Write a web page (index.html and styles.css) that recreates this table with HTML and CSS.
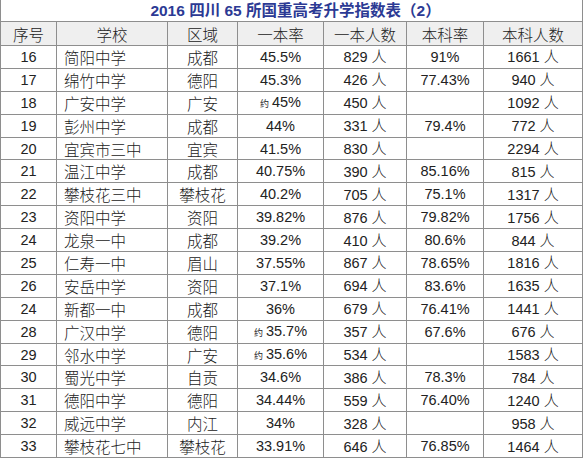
FILE: index.html
```html
<!DOCTYPE html>
<html lang="zh">
<head>
<meta charset="utf-8">
<title>2016 四川 65 所国重高考升学指数表（2）</title>
<link rel="stylesheet" href="styles.css">
</head>
<body>
<table class="sheet">
  <colgroup>
    <col class="c-no"><col class="c-school"><col class="c-area"><col class="c-rate"><col class="c-num"><col class="c-brate"><col class="c-bnum">
  </colgroup>
  <thead>
    <tr class="title-row"><th colspan="7" class="title">2016 四川 65 所国重高考升学指数表（2）</th></tr>
    <tr class="head-row">
      <th>序号</th><th>学校</th><th>区域</th><th>一本率</th><th>一本人数</th><th>本科率</th><th>本科人数</th>
    </tr>
  </thead>
  <tbody>
    <tr><td>16</td><td class="cn school">简阳中学</td><td class="cn">成都</td><td>45.5%</td><td>829 <span class="unit">人</span></td><td>91%</td><td>1661 <span class="unit">人</span></td></tr>
    <tr><td>17</td><td class="cn school">绵竹中学</td><td class="cn">德阳</td><td>45.3%</td><td>426 <span class="unit">人</span></td><td>77.43%</td><td>940 <span class="unit">人</span></td></tr>
    <tr><td>18</td><td class="cn school">广安中学</td><td class="cn">广安</td><td><span class="approx">约</span>45%</td><td>450 <span class="unit">人</span></td><td></td><td>1092 <span class="unit">人</span></td></tr>
    <tr><td>19</td><td class="cn school">彭州中学</td><td class="cn">成都</td><td>44%</td><td>331 <span class="unit">人</span></td><td>79.4%</td><td>772 <span class="unit">人</span></td></tr>
    <tr><td>20</td><td class="cn school">宜宾市三中</td><td class="cn">宜宾</td><td>41.5%</td><td>830 <span class="unit">人</span></td><td></td><td>2294 <span class="unit">人</span></td></tr>
    <tr><td>21</td><td class="cn school">温江中学</td><td class="cn">成都</td><td>40.75%</td><td>390 <span class="unit">人</span></td><td>85.16%</td><td>815 <span class="unit">人</span></td></tr>
    <tr><td>22</td><td class="cn school">攀枝花三中</td><td class="cn">攀枝花</td><td>40.2%</td><td>705 <span class="unit">人</span></td><td>75.1%</td><td>1317 <span class="unit">人</span></td></tr>
    <tr><td>23</td><td class="cn school">资阳中学</td><td class="cn">资阳</td><td>39.82%</td><td>876 <span class="unit">人</span></td><td>79.82%</td><td>1756 <span class="unit">人</span></td></tr>
    <tr><td>24</td><td class="cn school">龙泉一中</td><td class="cn">成都</td><td>39.2%</td><td>410 <span class="unit">人</span></td><td>80.6%</td><td>844 <span class="unit">人</span></td></tr>
    <tr><td>25</td><td class="cn school">仁寿一中</td><td class="cn">眉山</td><td>37.55%</td><td>867 <span class="unit">人</span></td><td>78.65%</td><td>1816 <span class="unit">人</span></td></tr>
    <tr><td>26</td><td class="cn school">安岳中学</td><td class="cn">资阳</td><td>37.1%</td><td>694 <span class="unit">人</span></td><td>83.6%</td><td>1635 <span class="unit">人</span></td></tr>
    <tr><td>24</td><td class="cn school">新都一中</td><td class="cn">成都</td><td>36%</td><td>679 <span class="unit">人</span></td><td>76.41%</td><td>1441 <span class="unit">人</span></td></tr>
    <tr><td>28</td><td class="cn school">广汉中学</td><td class="cn">德阳</td><td><span class="approx">约</span>35.7%</td><td>357 <span class="unit">人</span></td><td>67.6%</td><td>676 <span class="unit">人</span></td></tr>
    <tr><td>29</td><td class="cn school">邻水中学</td><td class="cn">广安</td><td><span class="approx">约</span>35.6%</td><td>534 <span class="unit">人</span></td><td></td><td>1583 <span class="unit">人</span></td></tr>
    <tr><td>30</td><td class="cn school">蜀光中学</td><td class="cn">自贡</td><td>34.6%</td><td>386 <span class="unit">人</span></td><td>78.3%</td><td>784 <span class="unit">人</span></td></tr>
    <tr><td>31</td><td class="cn school">德阳中学</td><td class="cn">德阳</td><td>34.44%</td><td>559 <span class="unit">人</span></td><td>76.40%</td><td>1240 <span class="unit">人</span></td></tr>
    <tr><td>32</td><td class="cn school">威远中学</td><td class="cn">内江</td><td>34%</td><td>328 <span class="unit">人</span></td><td></td><td>958 <span class="unit">人</span></td></tr>
    <tr><td>33</td><td class="cn school">攀枝花七中</td><td class="cn">攀枝花</td><td>33.91%</td><td>646 <span class="unit">人</span></td><td>76.85%</td><td>1464 <span class="unit">人</span></td></tr>
  </tbody>
</table>
</body>
</html>
```
FILE: styles.css
```css
html, body {
  margin: 0;
  padding: 0;
  background: #ffffff;
}
body {
  font-family: "Liberation Sans", "Noto Sans CJK SC", sans-serif;
  color: #222222;
}
.sheet {
  border-collapse: collapse;
  table-layout: fixed;
  width: 582px;
  font-size: 14.5px;
}
.c-no { width: 56px; }
.c-school { width: 111px; }
.c-area { width: 70px; }
.c-rate { width: 86px; }
.c-num { width: 83px; }
.c-brate { width: 77px; }
.c-bnum { width: 99px; }

.sheet th, .sheet td {
  border: 1px solid #8e8e8e;
  padding: 0;
  text-align: center;
  vertical-align: middle;
  font-weight: normal;
  line-height: 18px;
  white-space: nowrap;
  overflow: hidden;
}
.title-row th.title {
  height: 21px;
  border-top: none;
  color: #2c3a94;
  font-weight: bold;
  font-size: 15.5px;
  padding-left: 8px;
}
.head-row th {
  height: 23px;
  background: #efefef;
  font-family: "Noto Sans CJK SC", sans-serif;
  font-size: 15.5px;
  font-weight: 300;
}
.sheet tbody td {
  height: 21.9px;
}
.sheet td.cn {
  font-family: "Noto Sans CJK SC", sans-serif;
  font-size: 15.5px;
  font-weight: 300;
}
.sheet td.school {
  text-align: left;
  padding-left: 7px;
}
.unit {
  font-family: "Noto Sans CJK SC", sans-serif;
  font-size: 15px;
  font-weight: 300;
}
.approx {
  font-size: 9px;
  margin-right: 3px;
  font-family: "Noto Sans CJK SC", sans-serif;
}
```
